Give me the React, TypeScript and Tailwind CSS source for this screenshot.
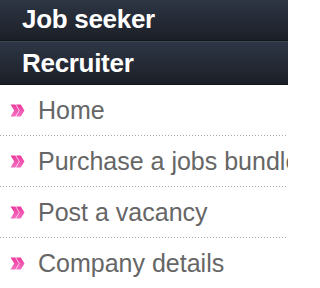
import React from "react";

const headers = ["Job seeker", "Recruiter"];
const links = ["Home", "Purchase a jobs bundle", "Post a vacancy", "Company details"];

const Chevrons: React.FC = () => (
  <svg width="15" height="13" viewBox="0 0 14 12" className="shrink-0">
    <defs>
      <linearGradient id="pk" x1="0" y1="0" x2="0" y2="1">
        <stop offset="0" stopColor="#ec3a9d" />
        <stop offset="1" stopColor="#f470c2" />
      </linearGradient>
    </defs>
    <path d="M0.5 0.5 L5 0.5 L8.4 6 L5 11.5 L0.5 11.5 L3.9 6 Z" fill="url(#pk)" />
    <path d="M5.6 0.5 L10.1 0.5 L13.5 6 L10.1 11.5 L5.6 11.5 L9 6 Z" fill="url(#pk)" />
  </svg>
);

export default function App() {
  return (
    <div className="w-[288px] h-[288px] overflow-hidden bg-white font-['Liberation_Sans',Arial,sans-serif]">
      <div className="-mt-[3px]">
        {headers.map((h) => (
          <div
            key={h}
            className="h-[44px] flex items-center pl-[22px] border-t border-[#3c4452] border-b border-b-[#14171c] bg-gradient-to-b from-[#2f3746] to-[#1b1f27]"
          >
            <span className="text-white font-bold text-[26px] leading-none tracking-[-0.3px]">{h}</span>
          </div>
        ))}
      </div>
      <ul>
        {links.map((l, i) => (
          <li key={l}>
            <div className="h-[50px] flex items-center gap-[13px] pl-[10px] whitespace-nowrap">
              <Chevrons />
              <span className="text-[25px] leading-none text-[#666666]">{l}</span>
            </div>
            {i < links.length - 1 && (
              <div className="h-px bg-[repeating-linear-gradient(to_right,#a8a8a8_0_1px,transparent_1px_3px)]" />
            )}
          </li>
        ))}
      </ul>
    </div>
  );
}
